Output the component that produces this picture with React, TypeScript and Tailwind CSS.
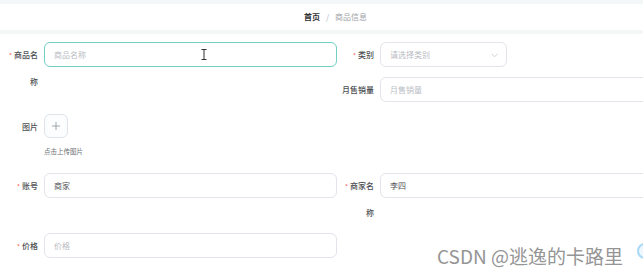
import React from 'react';

const font = { fontFamily: '"Noto Sans CJK SC", "Noto Sans", sans-serif' };

function Label({ text, required, lines = 1 }: { text: string; required?: boolean; lines?: number }) {
  return (
    <div
      className={`w-[40px] shrink-0 pr-[6px] text-right text-[8px] font-medium text-[#4d4f53] ${
        lines > 1 ? 'leading-[26px]' : 'leading-[25px]'
      }`}
    >
      {required && <span className="mr-[2px] text-[6px] text-[#f56c6c]">*</span>}
      {text}
    </div>
  );
}

function Input({
  placeholder,
  value,
  width,
  focused,
  children,
}: {
  placeholder?: string;
  value?: string;
  width: string;
  focused?: boolean;
  children?: React.ReactNode;
}) {
  return (
    <div
      className={`relative flex h-[25px] shrink-0 items-center rounded-[6px] border pl-[9px] text-[8px] ${width} ${
        focused ? 'border-[#6fd0c3]' : 'border-[#e1e4ea]'
      }`}
    >
      {value ? (
        <span className="text-[#505257]">{value}</span>
      ) : (
        <span className="text-[#b9bcc3]">{placeholder}</span>
      )}
      {children}
    </div>
  );
}

export default function App() {
  return (
    <div className="relative h-[276px] w-[643px] overflow-hidden bg-white" style={font}>
      {/* breadcrumb header */}
      <div className="bg-[#f3f7f7] pt-[4px] pb-[4px]">
        <div className="flex h-[26px] items-center justify-center bg-white pl-[28px] text-[8px]">
          <span className="font-semibold text-[#303133]">首页</span>
          <span className="mx-[6px] text-[#b0b3b8]">/</span>
          <span className="text-[#a0a3a8]">商品信息</span>
        </div>
      </div>

      <div className="pt-[8px] pl-[4px]">
        {/* first block: two columns with uneven heights */}
        <div className="flex">
          <div className="w-[333px] shrink-0">
            <div className="flex items-start">
              <Label text="商品名称" required lines={2} />
              <Input placeholder="商品名称" width="w-[293px]" focused>
                <svg className="absolute left-[156px] top-[6px]" width="6" height="11" viewBox="0 0 6 11">
                  <path d="M0.5 0.5h5M3 0.5v10M0.5 10.5h5" stroke="#333" strokeWidth="1" fill="none" />
                </svg>
              </Input>
            </div>
            <div className="mt-[19px] flex items-start">
              <Label text="图片" />
              <div className="flex h-[24px] w-[24px] items-center justify-center rounded-[6px] border border-[#dfe3ea] bg-[#fbfdff]">
                <svg width="10" height="10" viewBox="0 0 10 10">
                  <path d="M5 1v8M1 5h8" stroke="#8c939d" strokeWidth="0.8" />
                </svg>
              </div>
            </div>
            <div className="mt-[8px] ml-[40px] text-[6.5px] leading-[8px] text-[#6b6e73]">点击上传图片</div>
          </div>

          <div className="ml-[3px]">
            <div className="flex items-start">
              <Label text="类别" required />
              <Input placeholder="请选择类别" width="w-[127px]">
                <svg className="absolute right-[8px] top-[10px]" width="7" height="5" viewBox="0 0 7 5">
                  <path d="M0.5 0.8L3.5 3.8L6.5 0.8" stroke="#c0c4cc" strokeWidth="0.8" fill="none" />
                </svg>
              </Input>
            </div>
            <div className="mt-[9px] flex items-start">
              <Label text="月售销量" />
              <Input placeholder="月售销量" width="w-[300px]" />
            </div>
          </div>
        </div>

        {/* account row */}
        <div className="mt-[18px] flex">
          <div className="flex w-[333px] shrink-0 items-start">
            <Label text="账号" required />
            <Input value="商家" width="w-[293px]" />
          </div>
          <div className="ml-[3px] flex items-start">
            <Label text="商家名称" required lines={2} />
            <Input value="李四" width="w-[300px]" />
          </div>
        </div>

        {/* price row */}
        <div className="mt-[7px] flex items-start">
          <Label text="价格" required />
          <Input placeholder="价格" width="w-[293px]" />
        </div>
      </div>

      {/* watermark */}
      <div className="absolute left-[437px] top-[244px] whitespace-nowrap text-[19px] leading-[24px] text-[#959595]">
        CSDN @逃逸的卡路里
      </div>
      <div className="absolute left-[637px] top-[243px] h-[16px] w-[16px] rounded-full border-2 border-[#a9d8f7] bg-[#eef8ff]" />
    </div>
  );
}
